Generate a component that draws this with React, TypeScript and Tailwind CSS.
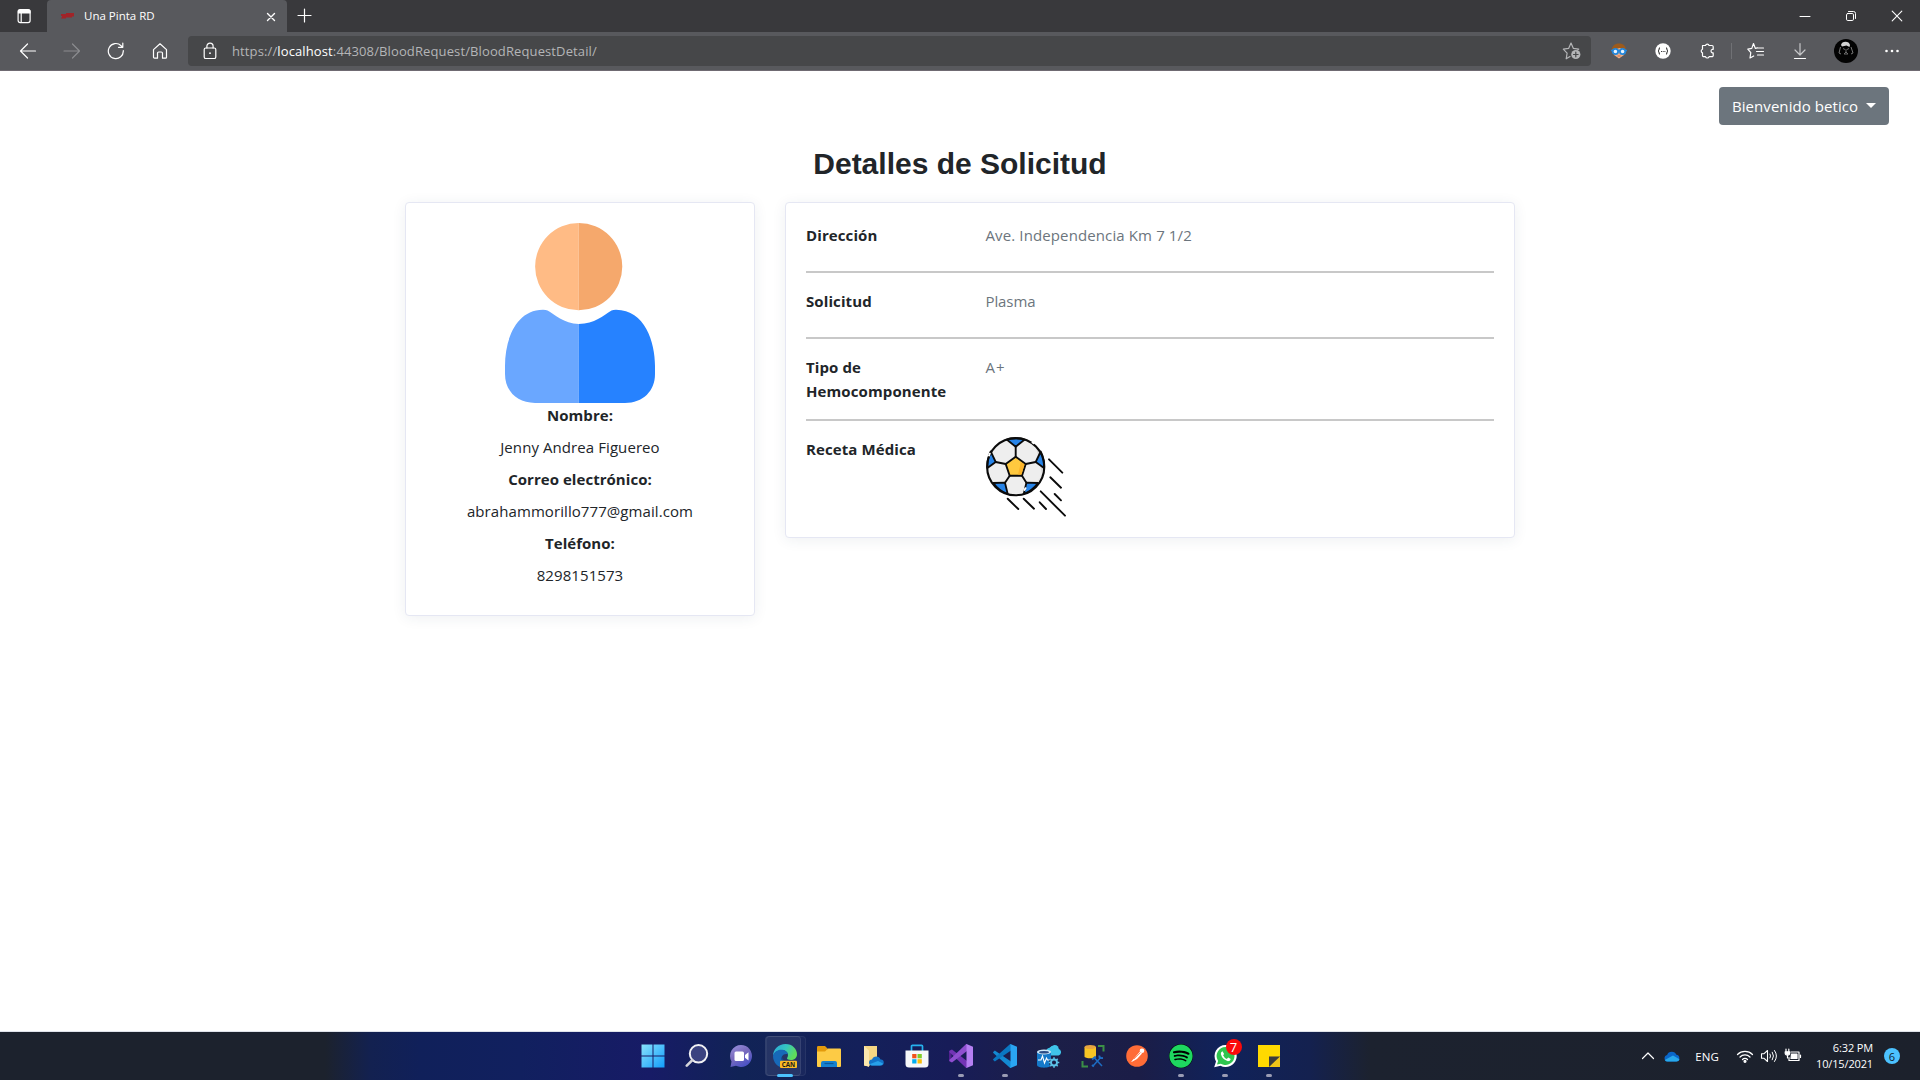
import React from "react";
import { FaSpotify } from "react-icons/fa";

type SvgProps = {
  w: number;
  h: number;
  className?: string;
  children: React.ReactNode;
};

function Svg({ w, h, className = "", children }: SvgProps) {
  return (
    <svg
      width={w}
      height={h}
      viewBox={`0 0 ${w} ${h}`}
      fill="none"
      stroke="currentColor"
      strokeWidth="1.2"
      strokeLinecap="round"
      strokeLinejoin="round"
      className={"shrink-0 " + className}
    >
      {children}
    </svg>
  );
}

function TabStrip() {
  return (
    <div className="flex h-8 bg-[#39393c] text-white">
      <div className="flex w-[47px] items-center justify-center">
        <Svg w={16} h={16}>
          <rect x="2.1" y="1.6" width="12" height="13" rx="2" />
          <path d="M2.500 3a1 1 0 0 1 1-1h9.500a1 1 0 0 1 1 1v2H2.500z" fill="currentColor" />
          <path d="M5.200 5v9" />
        </Svg>
      </div>
      <div className="flex w-60 items-center rounded-t-[4px] bg-[#58595d] pr-[9px] pl-3.5">
        <svg width="13" height="6" viewBox="0 0 13 6" className="shrink-0">
          <path d="M0 1h5v2H0zM5 0h8v3.4H5zM1 3h10v1.4H1zM0 4.6h5v.9H0z" fill="#b3161c" opacity=".8" />
        </svg>
        <span className="ml-[10px] text-[11.5px] whitespace-nowrap">Una Pinta RD</span>
        <Svg w={14} h={14} className="mt-px ml-auto">
          <path d="M3.5 3.500l7 7M10.500 3.500l-7 7" strokeWidth="1.4" />
        </Svg>
      </div>
      <div className="flex items-center pl-2.5">
        <Svg w={16} h={16}>
          <path d="M7.500 1v13M1 7.500h13" />
        </Svg>
      </div>
      <div className="ml-auto flex items-center">
        <div className="flex w-[46px] justify-center">
          <Svg w={12} h={12}>
            <path d="M1 6.5h10" strokeWidth="1" />
          </Svg>
        </div>
        <div className="flex w-[46px] justify-center">
          <Svg w={12} h={12}>
            <rect x="1.5" y="3.5" width="7" height="7" rx="1.3" strokeWidth="1" />
            <path d="M3.5 1.5h5a2 2 0 0 1 2 2v5" strokeWidth="1" />
          </Svg>
        </div>
        <div className="flex w-[46px] justify-center">
          <Svg w={12} h={12}>
            <path d="M1.2 1.2l9.6 9.6M10.8 1.2l-9.6 9.6" strokeWidth="1.1" />
          </Svg>
        </div>
      </div>
    </div>
  );
}

function ToolSlot({ children }: { children: React.ReactNode }) {
  return <div className="flex w-11 shrink-0 items-center justify-center">{children}</div>;
}

function Toolbar() {
  return (
    <div className="flex h-[39px] items-center border-b border-[#6f6a72] bg-[#58595d] pl-1.5 text-white">
      <ToolSlot>
        <Svg w={18} h={18}>
          <path d="M16.500 9H1.5M8.5 2L1.5 9l7 7" />
        </Svg>
      </ToolSlot>
      <ToolSlot>
        <Svg w={18} h={18} className="text-[#8b8c8f]">
          <path d="M1 9h15.5M9.5 2l7 7-7 7" />
        </Svg>
      </ToolSlot>
      <ToolSlot>
        <Svg w={18} h={18}>
          <path d="M16.3 8.5a7.5 7.5 0 1 1-2.2-4.8L15.5 5M15.8 1v4.3h-4.3" />
        </Svg>
      </ToolSlot>
      <ToolSlot>
        <Svg w={18} h={18}>
          <path d="M2.500 7.600L9 1.800l6.500 5.800v7.600a1 1 0 0 1-1 1h-3v-5a1.200 1.200 0 0 0-1.200-1.200H7.700a1.200 1.200 0 0 0-1.200 1.200v5h-3a1 1 0 0 1-1-1z" />
        </Svg>
      </ToolSlot>
      <div className="ml-[6px] flex h-[30px] w-[1403px] items-center rounded-[4px] bg-[#464749] pr-[9px] pl-[13px]">
        <Svg w={18} h={18}>
          <rect x="3.200" y="6" width="11.600" height="10.500" rx="1.600" />
          <path d="M5.900 6V4.200a3.100 3.100 0 0 1 6.200 0V6" />
          <circle cx="9" cy="11.200" r=".9" fill="currentColor" stroke="none" />
        </Svg>
        <span className="mt-px ml-[13px] text-[13px] tracking-[0.12px] whitespace-nowrap text-[#b4b5b7]">
          https://<span className="text-white">localhost</span>:44308/BloodRequest/BloodRequestDetail/
        </span>
        <Svg w={20} h={20} className="ml-auto text-[#b4b5b7]">
          <path d="M8 15.500l-3.800 2.300.9-5.700L1.300 8.200l5.300-.8L9 2l2.400 5.400 5.300.8-1 1" />
          <circle cx="13.800" cy="13.500" r="4.600" fill="#b4b5b7" stroke="none" />
          <path d="M13.800 11.200v4.600M11.500 13.500h4.600" stroke="#464749" />
        </Svg>
      </div>
      <div className="ml-[6px] flex items-center">
        <ToolSlot>
          <svg width="16" height="16" viewBox="0 0 16 16">
            <path d="M1 8C0 3 4 .5 8 .5S15.500 3 15 8l-1.500 4h-11z" fill="#9c5a1c" />
            <path d="M3 6.500L9 5l4 2v5l-5 3.500L3 12z" fill="#f2b186" />
            <path d="M0 7.500h16" stroke="#2387dc" strokeWidth="1.500" />
            <circle cx="4.400" cy="8.500" r="2.700" fill="#e9f5ff" stroke="#2387dc" strokeWidth="1.800" />
            <circle cx="11.600" cy="8.500" r="2.700" fill="#e9f5ff" stroke="#2387dc" strokeWidth="1.800" />
            <path d="M6.500 13h3" stroke="#c76a4c" />
          </svg>
        </ToolSlot>
        <ToolSlot>
          <svg width="16" height="16" viewBox="0 0 16 16" fill="none" stroke="#222">
            <circle cx="8" cy="8" r="7.700" fill="#fff" stroke="none" />
            <path d="M5 4.500c-1.300 0-.4 2.800-1.900 3.500 1.500.7.600 3.500 1.900 3.500M11 4.500c1.300 0 .4 2.800 1.900 3.500-1.500.7-.6 3.500-1.900 3.500" />
            <path d="M6 8.500h4.500" strokeDasharray="1 .7" strokeWidth=".9" />
          </svg>
        </ToolSlot>
        <ToolSlot>
          <Svg w={18} h={18}>
            <path d="M4.500 3.500h3a1.900 1.900 0 0 1 3.600 0h2.900a1.200 1.200 0 0 1 1.200 1.200v2.600h-.9a1.900 1.900 0 0 0 0 3.600h.9v2.600a1.200 1.200 0 0 1-1.200 1.200h-2.900a1.900 1.900 0 0 1-3.600 0H5.700a1.200 1.200 0 0 1-1.200-1.200v-2.600a1.900 1.900 0 0 1 0-3.600z" />
          </Svg>
        </ToolSlot>
        <div className="ml-0.5 h-4 w-px bg-[#707175]" />
        <div className="ml-[2px] flex">
          <ToolSlot>
            <Svg w={18} h={18}>
              <path d="M10.500 5.800L8.300 6.400 6.500 1.500 4.800 6.400l-4 .7 3 3.500-.8 5.400 3.700-2M11 6h5.500M9.500 9.500h7M10.500 13h6" />
            </Svg>
          </ToolSlot>
          <ToolSlot>
            <Svg w={18} h={18}>
              <path d="M9 1.500v11M4 8l5 5 5-5" className="text-[#c6c7c9]" stroke="currentColor" />
              <path d="M3.500 16.500h11" />
            </Svg>
          </ToolSlot>
          <div className="flex w-12 items-center justify-center">
            <svg width="24" height="24" viewBox="0 0 24 24">
              <circle cx="12" cy="12" r="12" fill="#030303" />
              <path d="M7 6c.5-4.500 8.500-4.500 9 0l-.5 2-3-1.500L8 7.500z" fill="#d4d4d4" />
              <path d="M6.500 8L5 14l2 1M17 8l2 6-2 1" stroke="#777" fill="none" />
              <path d="M9 9.500l2 1M15 9.500l-2 1M12 10v3M10 15l2-2 2 2z" stroke="#6b6b6b" fill="none" />
            </svg>
          </div>
          <ToolSlot>
            <Svg w={18} h={18}>
              <g fill="currentColor" stroke="none">
                <circle cx="3.500" cy="9" r="1.300" />
                <circle cx="9" cy="9" r="1.300" />
                <circle cx="14.500" cy="9" r="1.300" />
              </g>
            </Svg>
          </ToolSlot>
        </div>
      </div>
    </div>
  );
}

function PersonPicture() {
  return (
    <svg width="150" height="180" viewBox="0 0 150 180" className="block">
      <path d="M73.700 0a43.600 43.600 0 0 0 0 87.200z" fill="#ffbb85" />
      <path d="M73.700 0a43.600 43.600 0 0 1 0 87.200z" fill="#f5a86c" />
      <path
        d="M73.700 101C59 101 49 91 42.500 87.600Q41 86.700 38 86.700C10 87 0 118 0 143v8c0 17 12 29 30 29h43.700z"
        fill="#6aa7ff"
      />
      <path
        d="M73.700 101C90 101 98 92.500 106.500 87.600Q108 86.700 111 86.700C140 87 150 119 150 143v8c0 17-12 29-30 29H73.700z"
        fill="#2682ff"
      />
    </svg>
  );
}

function BallPicture() {
  return (
    <svg
      width="80"
      height="80"
      viewBox="0 0 80 80"
      fill="none"
      stroke="#0b0b0b"
      strokeWidth="1.900"
      strokeLinecap="round"
      strokeLinejoin="round"
      className="block"
    >
      <circle cx="29.700" cy="29.700" r="28.600" fill="#eeeeee" stroke="none" />
      <path d="M50 10c10 12 10 28-3 40l4-5 5-7-2-12z" fill="#d8d8d8" stroke="none" />
      <g fill="#2784e8" strokeWidth="1.800">
        <path d="M20.700 2.500q9-2.500 18 0L29.700 9.700z" />
        <path d="M4.700 14.500L9.700 25 1.400 31Q1 22 4.700 14.500z" />
        <path d="M54.700 14.500L49.700 25 58 31Q58.500 22 54.700 14.500z" />
        <path d="M7.300 46L19 45.700 21.700 57Q13 54 7.300 46z" />
        <path d="M52 46L40.400 45.700 37.700 57Q46 54 52 46z" />
      </g>
      <path d="M29.700 19.700L39.700 27 36 38.700H23.700L19.700 27z" fill="#ffc93f" />
      <path d="M35 25l3.500 2.500L35.500 37.500H32z" fill="#fbb42a" stroke="none" />
      <path d="M29.700 9.700v10M9.700 25l10 2M49.700 25l-10 2M23.700 38.700l-4.700 7M36 38.700l4.400 7" />
      <circle cx="29.700" cy="29.700" r="28.600" strokeWidth="2.100" />
      <path d="M46.500 5.500l1.200.8M38.500 53l1-1.800M3 18.500l.8-1.800" stroke="#fff" />
      <path d="M63 22.300l13.300 13.400M64.300 40.300L75 50.700M68.700 57l6.300 6.300M54.700 54.300l24.300 24.400M21.700 61.700L32.300 72M37.700 61.700l10.300 10M53.700 65.300L60 72" />
    </svg>
  );
}

const card =
  "rounded-[4px] border border-[#e5e7f3] bg-white p-5 shadow-[0_2px_14px_rgba(38,60,85,0.08)]";

function ContactCard() {
  const lines = [
    { label: "Nombre:", value: "Jenny Andrea Figuereo" },
    { label: "Correo electrónico:", value: "abrahammorillo777@gmail.com" },
    { label: "Teléfono:", value: "8298151573" },
  ];
  return (
    <section className={card + " flex h-[414px] w-[350px] flex-col items-center text-[15px] leading-6"}>
      <PersonPicture />
      <div className="flex flex-col items-center gap-2">
        {lines.map((l) => (
          <React.Fragment key={l.label}>
            <strong className="font-bold tracking-[0.04px]">{l.label}</strong>
            <p className="tracking-[0.08px]">{l.value}</p>
          </React.Fragment>
        ))}
      </div>
    </section>
  );
}

function Row({ label, children }: { label: string; children: React.ReactNode }) {
  return (
    <div className="flex min-h-8">
      <h6 className="w-[179.500px] shrink-0 pr-[30px] font-bold tracking-[0.1px]">{label}</h6>
      <div className="tracking-[0.12px] text-[#6c757d]">{children}</div>
    </div>
  );
}

function RequestCard() {
  const rule = <hr className="my-4 h-[2px] border-0 bg-[#c8c8c8]" />;
  return (
    <section className={card + " w-[730px] text-[15px] leading-6"}>
      <Row label="Dirección">Ave. Independencia Km 7 1/2</Row>
      {rule}
      <Row label="Solicitud">
        <span className="tracking-[-0.1px]">Plasma</span>
      </Row>
      {rule}
      <Row label="Tipo de Hemocomponente">
        <span className="tracking-[1px]">A+</span>
      </Row>
      {rule}
      <Row label="Receta Médica">
        <BallPicture />
      </Row>
    </section>
  );
}

function Page() {
  return (
    <main className="flex h-[960px] flex-col bg-white text-[#212529]">
      <div className="flex justify-end pt-4 pr-[31px]">
        <button className="flex h-[38px] w-[170px] items-center rounded-[4px] bg-[#6c757d] pl-[13px] text-[15px] tracking-[0.06px] whitespace-nowrap text-white">
          Bienvenido betico
          <svg width="10" height="5" viewBox="0 0 10 5" className="-mt-px ml-2">
            <path d="M0 0h10L5 5z" fill="#fff" />
          </svg>
        </button>
      </div>
      <h2 className="mt-[21px] text-center font-['Liberation_Sans',sans-serif] text-[30px] leading-9 font-bold">
        Detalles de Solicitud
      </h2>
      <div className="mt-[20px] flex items-start justify-center gap-[30px]">
        <ContactCard />
        <RequestCard />
      </div>
    </main>
  );
}

function Icon24({ children }: { children: React.ReactNode }) {
  return (
    <svg width="24" height="24" viewBox="0 0 24 24" fill="none">
      {children}
    </svg>
  );
}

const apps: { name: string; mark?: "active" | "open"; icon: React.ReactNode }[] = [
  {
    name: "start",
    icon: (
      <Icon24>
        <defs>
          <linearGradient id="win" gradientUnits="userSpaceOnUse" x1="0" y1="0" x2="24" y2="24">
            <stop offset="0" stopColor="#8be4fd" />
            <stop offset="1" stopColor="#0f9bfb" />
          </linearGradient>
        </defs>
        <path d="M.5.500h11v11H.500zM12.500.500h11v11h-11zM.500 12.500h11v11H.500zM12.500 12.500h11v11h-11z" fill="url(#win)" />
      </Icon24>
    ),
  },
  {
    name: "search",
    icon: (
      <Icon24>
        <circle cx="13.500" cy="9.800" r="8.700" fill="#3a4280" stroke="#f1f1f4" strokeWidth="2" />
        <path d="M7.300 16.200l-5.500 5.500" stroke="#d5d5da" strokeWidth="2.600" strokeLinecap="round" />
      </Icon24>
    ),
  },
  {
    name: "chat",
    icon: (
      <Icon24>
        <defs>
          <linearGradient id="chat" x1="0" y1="0" x2=".6" y2="1">
            <stop offset="0" stopColor="#9a93e0" />
            <stop offset=".5" stopColor="#7a6bbd" />
            <stop offset="1" stopColor="#4a52c5" />
          </linearGradient>
        </defs>
        <path d="M12 1a11 11 0 1 1-5 20.800L1.500 23l1-5.500A11 11 0 0 1 12 1z" fill="url(#chat)" />
        <rect x="5.500" y="7.500" width="9.500" height="9.500" rx="1.500" fill="#fff" />
        <path d="M16 11l3.500-2.800v8.200L16 13.800z" fill="#fff" />
      </Icon24>
    ),
  },
  {
    name: "edge",
    mark: "active",
    icon: (
      <Icon24>
        <defs>
          <linearGradient id="edgeTop" x1="0" y1="0" x2="1" y2=".4">
            <stop offset="0" stopColor="#2aa6dd" />
            <stop offset=".55" stopColor="#35c6c0" />
            <stop offset="1" stopColor="#5fdc5a" />
          </linearGradient>
        </defs>
        <path d="M0 12C0 5 5.500 0 12.500 0S24 5 24 10.200c0 4-3 5.800-6.200 5.800-2.300 0-3.800-.8-3.800-1.700 0-.8 1-1.200 1-3.300 0-3-3-5-6.500-5S1.500 8.500 0 12z" fill="url(#edgeTop)" />
        <path d="M0 12c1-4 4.500-6.200 8-6.200 3.800 0 6.500 1.900 6.900 4.400-5-1.200-7 2.800-5.900 6.300C10 20 13 22 17 22c-2 1.500-4 2-5 2C5 24 0 18.500 0 12z" fill="#1769b8" />
        <path d="M8.900 12.500C7 17 10.500 22 17 22c2 0 4-1 5.500-3-5 1.500-12 0-13.600-6.500z" fill="#114a8c" />
        <rect x="7" y="16.800" width="17" height="7.200" rx="1" fill="#fbb925" />
        <text x="15.500" y="22.800" textAnchor="middle" fontSize="6.300" fontWeight="700" fill="#1a1a1a" fontFamily="Open Sans, sans-serif">
          CAN
        </text>
      </Icon24>
    ),
  },
  {
    name: "files",
    icon: (
      <Icon24>
        <path d="M0 3.200Q0 2 1.200 2H8l2.500 2.500V8H0z" fill="#e39a0c" />
        <path d="M0 7.500h8L11 4.500h12q1 0 1 1V22q0 1-1 1H1q-1 0-1-1z" fill="#fdcb45" />
        <path d="M4 23v-4q0-2 2-2h12q2 0 2 2v4z" fill="#1580cf" />
        <path d="M7.500 19.500h9" stroke="#0b5799" strokeWidth="1.200" />
      </Icon24>
    ),
  },
  {
    name: "onedrive-folder",
    icon: (
      <Icon24>
        <path d="M3 2h13v14l-8 6H4q-1 0-1-1z" fill="#f6d683" />
        <path d="M3 2l5 4.500V23l-4-1.500q-1-.5-1-1.500z" fill="#fbe7ad" />
        <path d="M11 21.500a3 3 0 0 1 0-6 4.500 4.500 0 0 1 8.500 0 3 3 0 0 1 .5 6z" fill="#1373c9" />
        <path d="M9 20l8-3 5 2.500q-.5 2-3 2h-8q-1.500 0-2-1.500z" fill="#27a0ea" />
      </Icon24>
    ),
  },
  {
    name: "store",
    icon: (
      <Icon24>
        <path d="M6.500 7V2.200q0-.9.900-.9h9.200q.9 0 .9.900V7" stroke="#26b2ee" strokeWidth="1.700" />
        <path d="M.5 6.500h23V20q0 3.500-3.500 3.500H4Q.5 23.500.5 20z" fill="#f6f7f9" />
        <path d="M7.200 10h4.300v4.300H7.200z" fill="#f1511b" />
        <path d="M12.500 10h4.300v4.300h-4.300z" fill="#80cc28" />
        <path d="M7.200 15.200h4.300v4.300H7.200z" fill="#00adef" />
        <path d="M12.500 15.200h4.300v4.300h-4.300z" fill="#fbbc09" />
      </Icon24>
    ),
  },
  {
    name: "visual-studio",
    mark: "open",
    icon: (
      <Icon24>
        <path d="M0 7l2.500-1.400v12.800L0 17z" fill="#52218f" />
        <path d="M.3 6.900L3 5.500 18 17v7h-.8L.8 8.500z" fill="#7234b5" />
        <path d="M.3 17.100L3 18.500 18 7V0h-.8L.8 15.500z" fill="#8f4fd0" />
        <path d="M17.500 0L24 2.800v18.400L17.500 24z" fill="#b57ff2" />
      </Icon24>
    ),
  },
  {
    name: "vscode",
    mark: "open",
    icon: (
      <Icon24>
        <path d="M0 8.200l1.800-1.700L18 17.500V24h-.8L.3 9z" fill="#1389d2" />
        <path d="M0 15.800l1.800 1.700L18 6.500V0h-.8L.3 15z" fill="#0a77c2" />
        <path d="M17.500 0L24 2.800v18.400L17.500 24z" fill="#2aa5f2" />
      </Icon24>
    ),
  },
  {
    name: "data-studio",
    icon: (
      <Icon24>
        <path d="M12 11.500a4 4 0 0 1 .5-7.800 5.500 5.500 0 0 1 8.700 1 3.500 3.500 0 0 1 .3 6.800z" fill="#3fc4ea" />
        <path d="M13 4a5 5 0 0 1 8-1.500l1 3z" fill="#3fc4ea" />
        <path d="M0 8v13c0 3.500 14 3.500 14 0V8z" fill="#1579c9" />
        <ellipse cx="7" cy="8" rx="7" ry="2.400" fill="#cfe9f8" />
        <ellipse cx="7" cy="8.200" rx="5" ry="1.300" fill="#2a4d86" />
        <path d="M1 16h3l1.500-4 2 7 2-5 1 2H13" stroke="#fff" strokeWidth="1.100" />
        <circle cx="17" cy="18.500" r="5" fill="#1a1e46" />
        <circle cx="17" cy="18.500" r="3" stroke="#5cc3e8" strokeWidth="1.900" />
        <path d="M17 13.200v2M17 21.800v2M11.700 18.500h2M20.300 18.500h2M13.300 14.800l1.400 1.400M19.300 20.800l1.400 1.400M20.700 14.800l-1.400 1.400M14.700 20.800l-1.400 1.400" stroke="#5cc3e8" strokeWidth="1.600" />
      </Icon24>
    ),
  },
  {
    name: "sql-tools",
    icon: (
      <Icon24>
        <path d="M17 2h5.500v5.500M1.500 17v5.500H7" stroke="#3b8f46" strokeWidth="2" />
        <path d="M3.500 3v9.500c0 2.400 11.500 2.400 11.500 0V3z" fill="#f8c524" />
        <ellipse cx="9.200" cy="3" rx="5.700" ry="2" fill="#e8a53f" />
        <path d="M13.500 14l7.500 8M20 13l-8 9" stroke="#1d6cc2" strokeWidth="1.500" />
        <path d="M11 15.500l3.800-3M18.500 11.500q-1 3 3.500 2.500M11 21l1.800 1.600" stroke="#1d6cc2" strokeWidth="1.900" />
      </Icon24>
    ),
  },
  {
    name: "postman",
    icon: (
      <Icon24>
        <circle cx="12" cy="12" r="10.800" fill="#ff6c37" />
        <circle cx="17" cy="6.800" r="2.300" fill="#fff" />
        <path d="M15 7.500l2 2-5 5.500-4.500 2.500-1.500.5 3-3.500z" fill="#fff" />
        <path d="M9 15l6.500-6.500" stroke="#ff6c37" strokeWidth=".7" />
      </Icon24>
    ),
  },
  {
    name: "spotify",
    mark: "open",
    icon: (
      <span className="flex size-6 items-center justify-center rounded-full bg-black">
        <FaSpotify className="size-6 text-[#1ed760]" />
      </span>
    ),
  },
  {
    name: "whatsapp",
    mark: "open",
    icon: (
      <span className="relative flex size-6 items-center justify-center">
        <Icon24>
          <path d="M12.500 1a11 11 0 1 1-5 20.700L1.200 23.300 3 17.500A11 11 0 0 1 12.500 1z" fill="#fff" />
          <path d="M12.500 3a9 9 0 1 1-4.700 16.700L4 20.600l1.100-3.700A9 9 0 0 1 12.500 3z" fill="#2fc54f" />
          <path d="M9.500 7.200q-1.800.8-1.700 2.800 1.500 5.500 7.200 7.200 2.200 0 2.800-2.200l-2.600-1.500-1.400 1.400q-2.600-1-3.700-3.700l1-1.200z" fill="#fff" />
        </Icon24>
        <span className="absolute -top-[5px] left-[13px] flex size-4 items-center justify-center rounded-full bg-[#fb0a0a] text-[13px] leading-none text-white">
          7
        </span>
      </span>
    ),
  },
  {
    name: "notes",
    mark: "open",
    icon: (
      <Icon24>
        <path d="M1 1h22v11.500L12 23H1z" fill="#ffd900" />
        <path d="M12 12.500h11V23H12z" fill="#f0c419" />
        <path d="M12 12.500h11L12 23z" fill="#3b3b3b" />
      </Icon24>
    ),
  },
];

function Taskbar() {
  return (
    <footer className="grid h-[49px] grid-cols-[1fr_auto_1fr] border-t border-[#dfe3ea] bg-[linear-gradient(90deg,#1c222d_0px,#1c222d_325px,#132150_370px,#10205a_420px,#11205f_520px,#171b66_650px,#112356_740px,#14205a_860px,#171c58_950px,#1c1f48_1040px,#1b1d47_1140px,#10225a_1220px,#14214f_1310px,#1c222f_1370px,#1c212c_1920px)] text-white">
      <div />
      <div className="ml-px flex">
        {apps.map((a) => (
          <div key={a.name} className="relative flex w-11 items-center justify-center">
            {a.mark === "active" && (
              <>
                <div className="absolute top-1 left-[3px] h-10 w-10 rounded-[4px] border border-white/6 bg-white/3" />
                <div className="absolute top-1 left-[2px] h-10 w-9 rounded-[4px] border border-white/8 bg-white/6" />
              </>
            )}
            <div className="relative">{a.icon}</div>
            {a.mark === "active" && <div className="absolute bottom-[3px] left-[14px] h-[3px] w-4 rounded-full bg-[#4cc2ff]" />}
            {a.mark === "open" && <div className="absolute bottom-[3px] left-[19px] h-[3px] w-1.5 rounded-full bg-[#9a9cb4]" />}
          </div>
        ))}
      </div>
      <div className="flex items-center justify-end pr-5">
        <Svg w={14} h={14}>
          <path d="M1.500 9.500L7 4l5.500 5.500" />
        </Svg>
        <svg width="16" height="11" viewBox="0 0 16 11" className="ml-[9px]">
          <path d="M3.500 10.500a3.300 3.300 0 0 1-.4-6.500 5 5 0 0 1 9.300-.2 3.400 3.400 0 0 1 .3 6.700z" fill="#0a66c8" />
          <path d="M.8 9L9 4.500l6.500 3.700q-.5 2.300-3 2.300H3.500Q1.500 10.500.8 9z" fill="#28a8ea" />
        </svg>
        <span className="mt-px ml-[15px] text-[11.5px] tracking-[0.1px]">ENG</span>
        <Svg w={18} h={16} className="ml-[17px]">
          <path d="M1.500 6.500a10.500 10.500 0 0 1 15 0M4 9a7 7 0 0 1 10 0M6.500 11.500a3.500 3.500 0 0 1 5 0" />
          <circle cx="9" cy="13.300" r="1" fill="currentColor" />
        </Svg>
        <Svg w={18} h={16} className="ml-[6px]">
          <path d="M1.500 5.800h2.300L7.500 2.500v11L3.800 10.200H1.500z" strokeWidth="1.100" />
          <path d="M10 6q1.200 2 0 4M12.300 4.200q2.500 3.800 0 7.600M14.500 2.500q4 5.500 0 11" strokeWidth="1" />
        </Svg>
        <Svg w={18} h={16} className="ml-[6px]">
          <path d="M7 4h8v8.500H5V9.500M16.500 7v2.500" />
          <path d="M7.500 6H13v4.500H7z" fill="currentColor" />
          <path d="M2 1v2.500M4.800 1v2.500M1.200 3.800h4.500v1.500q0 1.800-2.200 1.800T1.200 5.300zM3.500 7v3" fill="currentColor" />
        </Svg>
        <div className="ml-[14px] text-right text-[11px] leading-4 tracking-[-0.14px] whitespace-nowrap">
          <div>6:32 PM</div>
          <div>10/15/2021</div>
        </div>
        <span className="ml-[11px] flex size-4 items-center justify-center rounded-full bg-[#4cc2ff] text-[11px] leading-none text-[#10202c]">
          6
        </span>
      </div>
    </footer>
  );
}

export default function App() {
  return (
    <div className="h-[1080px] w-[1920px] overflow-hidden bg-white font-['Open_Sans','Noto_Sans',sans-serif]">
      <TabStrip />
      <Toolbar />
      <Page />
      <Taskbar />
    </div>
  );
}
